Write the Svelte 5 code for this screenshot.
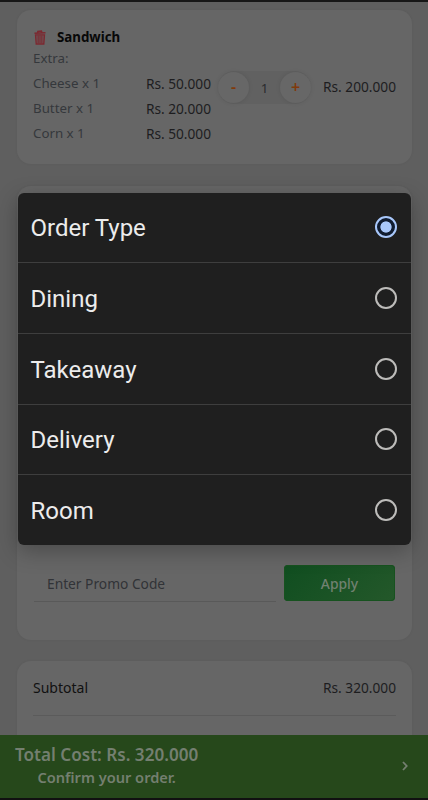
<script lang="ts">
	const extras = [
		{ name: 'Cheese x 1', price: 'Rs. 50.000' },
		{ name: 'Butter x 1', price: 'Rs. 20.000' },
		{ name: 'Corn x 1', price: 'Rs. 50.000' }
	];
	const orderTypes = ['Order Type', 'Dining', 'Takeaway', 'Delivery', 'Room'];

	let selected = $state('Order Type');
	let quantity = $state(1);
</script>

<div class="screen">
	<main class="page">
		<section class="card item">
			<div class="details">
				<h2 class="name">
					<svg class="trash" viewBox="0 0 12 15" fill="none" stroke="currentColor">
						<path d="M.5 3.3l11-.6M3.6 2.6l.2-1.3 3.6-.3.5 1.3" stroke-width="1.4" />
						<path d="M1.5 4.8l.7 9.2h7.6l.7-9.2z" fill="currentColor" fill-opacity=".35" stroke-width="1.3" />
						<path d="M4.2 5.5v7.5M6 5.5v7.5M7.8 5.5v7.5" stroke-width=".9" />
					</svg>
					<span class="title">Sandwich</span>
				</h2>
				<p class="muted extra-label">Extra:</p>
				{#each extras as extra}
					<div class="extra">
						<span class="muted">{extra.name}</span>
						<span class="price">{extra.price}</span>
					</div>
				{/each}
			</div>
			<div class="stepper">
				<button class="step" aria-label="Remove one" onclick={() => quantity--}>-</button>
				<span class="count">{quantity}</span>
				<button class="step" aria-label="Add one" onclick={() => quantity++}>+</button>
			</div>
			<span class="price total">Rs. 200.000</span>
		</section>

		<section class="card options">
			<div class="promo">
				<span class="promo-input">Enter Promo Code</span>
				<button class="apply">Apply</button>
			</div>
		</section>

		<section class="card summary">
			<div class="summary-row">
				<span class="subtotal">Subtotal</span>
				<span class="price">Rs. 320.000</span>
			</div>
		</section>
	</main>

	<footer class="checkout">
		<div class="checkout-text">
			<strong class="cost">Total Cost: Rs. 320.000</strong>
			<span class="confirm">Confirm your order.</span>
		</div>
		<svg class="chevron" viewBox="0 0 6 10" fill="none" stroke="currentColor" stroke-width="1.8">
			<path d="M1 1l3.7 4L1 9" />
		</svg>
	</footer>

	<div class="dialog" role="radiogroup">
		{#each orderTypes as type}
			<button
				class="option"
				role="radio"
				aria-checked={selected === type}
				onclick={() => (selected = type)}
			>
				<span class="option-label">{type}</span>
				<span class={['radio', selected === type && 'checked']}></span>
			</button>
		{/each}
	</div>
</div>

<style>
	:global(body) {
		background: #111;
	}

	.screen {
		position: relative;
		display: flex;
		flex-direction: column;
		box-sizing: border-box;
		width: 428px;
		height: 800px;
		overflow: hidden;
		border-top: 2px solid #171717;
		border-bottom: 2px solid #111;
		background: #5f5f5f;
		font-family: 'Noto Sans', sans-serif;
		font-size: 13.3px;
		line-height: 25px;
		color: #1d1d1f;
	}

	button {
		padding: 0;
		border: none;
		font: inherit;
	}

	.page {
		display: flex;
		flex: 1;
		flex-direction: column;
		min-height: 0;
		padding: 8px 16px 0 17px;
		overflow: hidden;
	}

	.card {
		flex: none;
		box-sizing: border-box;
		border-radius: 14px;
		background: #666;
		box-shadow: 0 0 3px rgba(0, 0, 0, 0.05);
	}

	/* Cart item */
	.item {
		display: flex;
		height: 154px;
		padding: 16px 16px 0;
	}

	.details {
		width: 178px;
	}

	.name {
		display: flex;
		align-items: center;
		height: 22px;
		margin: 0;
		font-size: 13.3px;
		font-weight: 700;
		color: #080808;
	}

	.trash {
		width: 12px;
		height: 15px;
		margin: 0 11px 0 1px;
		color: #7c2830;
	}

	.price {
		font-size: 13.7px;
	}

	.muted {
		color: #35383c;
	}

	.extra-label {
		height: 23px;
		margin: 0;
		line-height: 20px;
	}

	.extra {
		display: flex;
		justify-content: space-between;
		height: 25px;
	}

	.stepper {
		display: flex;
		align-items: center;
		justify-content: space-between;
		width: 93px;
		height: 33px;
		margin: 45px 0 0 7px;
		border-radius: 17px;
		background: #616161;
	}

	.step {
		width: 31px;
		height: 31px;
		border-radius: 50%;
		background: #676767;
		box-shadow: 0 0 4px rgba(0, 0, 0, 0.1);
		font-size: 16px;
		font-weight: 600;
		color: #813a0b;
	}

	.count {
		padding-top: 1px;
		color: #292b2e;
	}

	.total {
		margin: 48px 0 0 auto;
	}

	/* Promo code */
	.options {
		display: flex;
		align-items: flex-end;
		height: 454px;
		margin-top: 22px;
		padding: 0 17px 38px;
	}

	.promo {
		display: flex;
		justify-content: space-between;
		width: 100%;
	}

	.promo-input {
		box-sizing: border-box;
		width: 242px;
		height: 37px;
		padding: 6px 13px 0;
		border-bottom: 1px solid #595959;
		font-size: 13.75px;
		color: #313337;
	}

	.apply {
		width: 111px;
		height: 36px;
		border-radius: 4px;
		background: linear-gradient(135deg, #104e20, #24582a);
		box-shadow: inset 0 0 0 1px #17521f;
		font-size: 13.9px;
		font-weight: 500;
		color: #718171;
	}

	/* Summary */
	.summary {
		height: 140px;
		margin-top: 21px;
		padding: 14px 16px 0;
	}

	.summary-row {
		display: flex;
		justify-content: space-between;
		height: 40px;
		border-bottom: 1px solid #5b5b5b;
	}

	.subtotal {
		font-size: 14px;
		color: #111;
	}

	/* Checkout bar */
	.checkout {
		display: flex;
		flex: none;
		align-items: center;
		justify-content: space-between;
		box-sizing: border-box;
		height: 63px;
		padding: 0 20px 2px 15px;
		background: #26481b;
		color: #747f70;
	}

	.checkout-text {
		display: flex;
		flex-direction: column;
		align-items: center;
		line-height: 22px;
	}

	.cost {
		font-size: 17.1px;
		font-weight: 600;
	}

	.confirm {
		font-size: 14.6px;
		font-weight: 600;
	}

	.chevron {
		width: 6px;
		height: 10px;
	}

	/* Order type picker */
	.dialog {
		position: absolute;
		top: 190.5px;
		left: 17.5px;
		width: 393px;
		height: 352.5px;
		display: flex;
		flex-direction: column;
		overflow: hidden;
		border-radius: 6px;
		background: #1f1f1f;
		box-shadow: 0 6px 22px rgba(0, 0, 0, 0.28);
	}

	.option {
		display: flex;
		flex: 1;
		align-items: center;
		justify-content: space-between;
		padding: 0 14px 0 13px;
		background: none;
		font-family: Roboto, sans-serif;
		font-size: 24px;
		color: #ececec;
	}

	.option + .option {
		border-top: 1px solid #3e3e3e;
	}

	.option-label {
		padding-top: 3px;
	}

	.radio {
		box-sizing: border-box;
		width: 22px;
		height: 22px;
		border: 2.5px solid #bdbcba;
		border-radius: 50%;
	}

	.radio.checked {
		border-color: #a8c7fa;
		background: radial-gradient(circle, #a8c7fa 5.2px, #101c30 6px);
	}
</style>
